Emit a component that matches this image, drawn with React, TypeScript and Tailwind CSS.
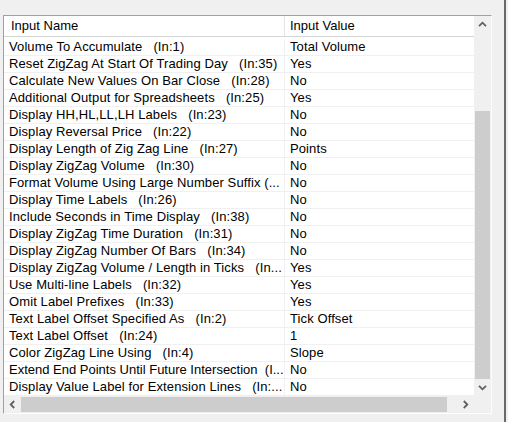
import React from "react";

type Row = { name: string; value: string; tight?: boolean };

const rows: Row[] = [
  { name: "Volume To Accumulate   (In:1)", value: "Total Volume" },
  { name: "Reset ZigZag At Start Of Trading Day   (In:35)", value: "Yes" },
  { name: "Calculate New Values On Bar Close   (In:28)", value: "No" },
  { name: "Additional Output for Spreadsheets   (In:25)", value: "Yes" },
  { name: "Display HH,HL,LL,LH Labels   (In:23)", value: "No" },
  { name: "Display Reversal Price   (In:22)", value: "No" },
  { name: "Display Length of Zig Zag Line   (In:27)", value: "Points" },
  { name: "Display ZigZag Volume   (In:30)", value: "No" },
  { name: "Format Volume Using Large Number Suffix (...", value: "No" },
  { name: "Display Time Labels   (In:26)", value: "No" },
  { name: "Include Seconds in Time Display   (In:38)", value: "No" },
  { name: "Display ZigZag Time Duration   (In:31)", value: "No" },
  { name: "Display ZigZag Number Of Bars   (In:34)", value: "No" },
  { name: "Display ZigZag Volume / Length in Ticks   (In...", value: "Yes" },
  { name: "Use Multi-line Labels   (In:32)", value: "Yes" },
  { name: "Omit Label Prefixes   (In:33)", value: "Yes" },
  { name: "Text Label Offset Specified As   (In:2)", value: "Tick Offset" },
  { name: "Text Label Offset   (In:24)", value: "1" },
  { name: "Color ZigZag Line Using   (In:4)", value: "Slope" },
  { name: "Extend End Points Until Future Intersection  (I...", value: "No", tight: true },
  { name: "Display Value Label for Extension Lines   (In:...", value: "No" },
];

function Chevron({ dir }: { dir: "up" | "down" | "left" | "right" }) {
  const rot = { up: 0, right: 90, down: 180, left: 270 }[dir];
  return (
    <svg width="9" height="9" viewBox="0 0 9 9" style={{ transform: `rotate(${rot}deg)` }}>
      <polyline
        points="1,6.2 4.5,2.7 8,6.2"
        fill="none"
        stroke="#606060"
        strokeWidth="1.8"
      />
    </svg>
  );
}

export default function App() {
  return (
    <div
      className="relative w-[508px] h-[422px] bg-[#f0f0f0] pt-[15px] pl-[3px] text-[13px] text-black"
      style={{ fontFamily: '"Liberation Sans", Arial, sans-serif' }}
    >
      {/* window edge on the right */}
      <div className="absolute right-[2px] top-0 h-full w-[2px] bg-[#6a6a6a]" />

      {/* list view box */}
      <div className="w-[489px] h-[399px] border border-t-[#a0a0a0] border-l-[#a0a0a0] border-r-[#fdfdfd] border-b-[#fdfdfd] bg-white flex flex-col">
        <div className="flex h-[380px]">
          {/* grid */}
          <div className="w-[470px] flex flex-col">
            {/* header */}
            <div className="flex h-[21px] border-b border-[#d5d5d5] bg-white leading-[20px]">
              <div className="w-[281px] border-r border-[#e5e5e5] pl-[7px]">Input Name</div>
              <div className="flex-1 pl-[5px]">Input Value</div>
            </div>
            <div className="h-[2px]" />
            {rows.map((r, i) => (
              <div key={i} className="flex h-[17px] border-b border-[#f0f0f0] leading-[16px]">
                <div
                  className={
                    r.tight
                      ? "w-[281px] border-r border-[#f0f0f0] pl-[5px] whitespace-pre tracking-normal"
                      : "w-[281px] border-r border-[#f0f0f0] pl-[5px] whitespace-pre overflow-hidden tracking-[0.1px]"
                  }
                >
                  {r.name}
                </div>
                <div className="flex-1 pl-[5px] whitespace-pre overflow-hidden tracking-[0.1px]">{r.value}</div>
              </div>
            ))}
          </div>

          {/* vertical scrollbar */}
          <div className="w-[17px] bg-[#f0f0f0] flex flex-col">
            <div className="h-[17px] flex items-center justify-center">
              <Chevron dir="up" />
            </div>
            <div className="h-[78px]" />
            <div className="h-[268px] mx-[1px] bg-[#cdcdcd]" />
            <div className="h-[17px] flex items-center justify-center">
              <Chevron dir="down" />
            </div>
          </div>
        </div>

        {/* horizontal scrollbar */}
        <div className="flex h-[17px] bg-[#f0f0f0]">
          <div className="w-[17px] flex items-center justify-center">
            <Chevron dir="left" />
          </div>
          <div className="w-[426px] my-[1px] bg-[#cdcdcd]" />
          <div className="w-[10px]" />
          <div className="w-[17px] flex items-center justify-center">
            <Chevron dir="right" />
          </div>
          <div className="w-[17px]" />
        </div>
      </div>
    </div>
  );
}
